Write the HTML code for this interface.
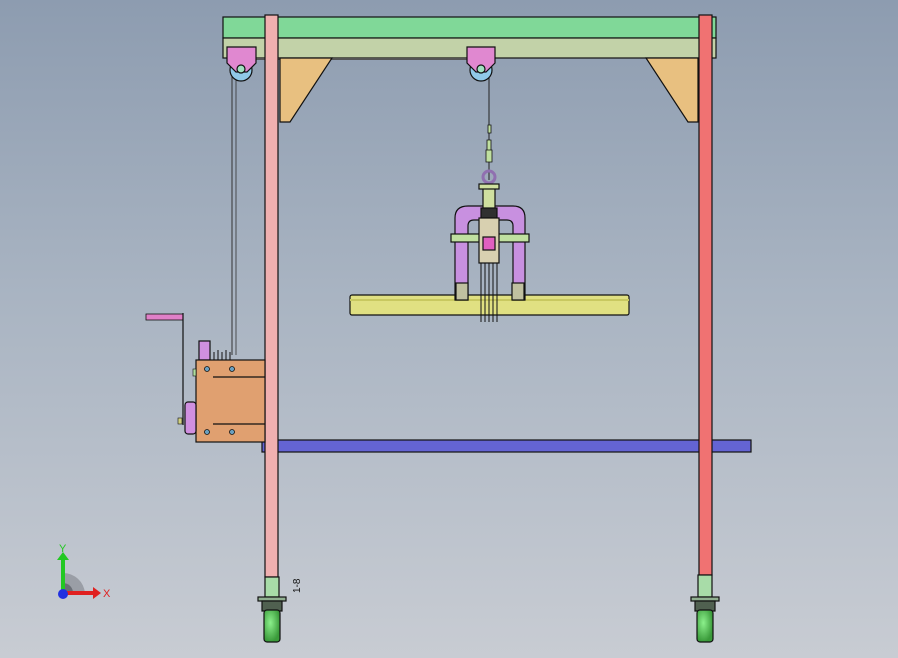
<!DOCTYPE html>
<html><head><meta charset="utf-8"><style>
html,body{margin:0;padding:0;width:898px;height:658px;overflow:hidden}
body{background:linear-gradient(#8d9cb0,#a9b4c2 45%,#c8ccd3)}
svg{position:absolute;left:0;top:0}
</style></head><body>
<svg width="898" height="658" viewBox="0 0 898 658" font-family="Liberation Sans, sans-serif">
<defs>
<radialGradient id="wh" cx="0.4" cy="0.4" r="0.6"><stop offset="0" stop-color="#8cf08c"/><stop offset="1" stop-color="#3a9a3a"/></radialGradient>
</defs>
<g stroke="#111" stroke-width="1.2">
<!-- beams -->
<rect x="223" y="17" width="493" height="21" fill="#80d898"/>
<rect x="223" y="38" width="493" height="20" fill="#c2d2a8"/>
<line x1="256" y1="59" x2="467" y2="59" stroke="#555" stroke-width="2"/>
<!-- gussets -->
<polygon points="280,58 332,58 290,122 280,122" fill="#e8c080"/>
<polygon points="646,58 698,58 698,122 688,122" fill="#e8c080"/>
<!-- ropes -->
<line x1="232" y1="72" x2="232" y2="355" stroke="#333" stroke-width="1"/>
<line x1="236" y1="72" x2="236" y2="355" stroke="#333" stroke-width="0.8"/>
<line x1="489" y1="78" x2="489" y2="180" stroke="#222" stroke-width="1"/>
<!-- pulleys -->
<circle cx="241" cy="70" r="11" fill="#90c8e8"/>
<path d="M227 47 H256 V63 L247 72 H236 L227 63 Z" fill="#e088d0"/>
<circle cx="241" cy="69" r="4" fill="#a0e0c0"/>
<circle cx="481" cy="70" r="11" fill="#90c8e8"/>
<path d="M467 47 H495 V63 L486 72 H476 L467 63 Z" fill="#e088d0"/>
<circle cx="481" cy="69" r="4" fill="#a0e0c0"/>
<!-- blue bar -->
<rect x="262" y="440" width="489" height="12" fill="#6464d4"/>
<!-- posts -->
<rect x="265" y="15" width="13" height="562" fill="#f0b0b0"/>
<rect x="699" y="15" width="13" height="560" fill="#f07272"/>
<!-- winch -->
<rect x="146" y="314" width="37" height="6" fill="#e080c8" stroke-width="0.8"/>
<line x1="183" y1="313" x2="183" y2="425"/>
<rect x="199" y="341" width="11" height="19" fill="#d090e0"/>
<path d="M210 360 V350 M214 360 V352 M218 360 V350 M222 360 V352 M226 360 V350 M230 360 V352" stroke-width="1"/>
<rect x="196" y="360" width="69" height="82" fill="#e0a070"/>
<rect x="185" y="402" width="11" height="32" rx="3" fill="#d090e0"/>
<rect x="193" y="369" width="3" height="7" fill="#b0e0a0" stroke-width="0.6"/>
<rect x="178" y="418" width="4" height="6" fill="#d0d080" stroke-width="0.6"/>
<line x1="213" y1="377" x2="265" y2="377"/><line x1="213" y1="424" x2="265" y2="424"/>
<g fill="#6aa0c0" stroke-width="0.8"><circle cx="207" cy="369" r="2.5"/><circle cx="232" cy="369" r="2.5"/><circle cx="207" cy="432" r="2.5"/><circle cx="232" cy="432" r="2.5"/></g>
<!-- tube -->
<rect x="350" y="295" width="279" height="20" rx="2" fill="#e0e082"/>
<line x1="350" y1="300" x2="629" y2="300" stroke="#c8c860" stroke-width="2"/>
<!-- clamp -->
<path d="M455 300 V218 Q455 206 468 206 H513 Q525 206 525 218 V300 H513 V226 Q513 220 507 220 H474 Q468 220 468 226 V300 Z" fill="#c890e0"/>
<rect x="456" y="283" width="12" height="17" fill="#c0c0a0"/>
<rect x="512" y="283" width="12" height="17" fill="#c0c0a0"/>
<rect x="451" y="234" width="78" height="8" fill="#c0e0a0"/>
<rect x="483" y="185" width="12" height="30" fill="#d0e0a0"/>
<rect x="481" y="208" width="16" height="10" fill="#303030"/>
<circle cx="489" cy="177" r="6" fill="none" stroke="#9070b0" stroke-width="3"/>
<rect x="479" y="184" width="20" height="5" fill="#d0e0a0"/>
<rect x="479" y="218" width="20" height="45" fill="#d8d0b0"/>
<rect x="483" y="237" width="12" height="13" fill="#e060c0"/>
<path d="M481 263 V322 M485 263 V322 M489 263 V322 M493 263 V322 M497 263 V322" stroke-width="1"/>
<path d="M488 125 h3 v8 h-3z M487 140 h4 v10 h-4z M486 150 h6 v12 h-6z" fill="#c0e0a0" stroke-width="0.8"/>
<!-- casters -->
<rect x="265" y="577" width="14" height="20" fill="#a8dca8"/>
<rect x="258" y="597" width="28" height="4" fill="#90b090"/>
<rect x="262" y="601" width="20" height="10" fill="#506050"/>
<rect x="264" y="610" width="16" height="32" rx="3" fill="url(#wh)"/>
<rect x="698" y="575" width="14" height="22" fill="#a8dca8"/>
<rect x="691" y="597" width="28" height="4" fill="#90b090"/>
<rect x="695" y="601" width="20" height="10" fill="#506050"/>
<rect x="697" y="610" width="16" height="32" rx="3" fill="url(#wh)"/>
</g>
<text x="292" y="595" font-size="10" fill="#111" transform="rotate(-90 295 590)">1-8</text>
<!-- axis triad -->
<path d="M63 593 L63 573 A22 22 0 0 1 85 593 Z" fill="#9a9ea6"/>
<path d="M63 593 L63 583 A10 10 0 0 1 73 593 Z" fill="#6a6e76"/>
<rect x="61" y="557" width="4" height="36" fill="#22c822"/>
<polygon points="57,560 63,552 69,560" fill="#22c822"/>
<rect x="63" y="591" width="32" height="4" fill="#e02020"/>
<polygon points="93,587 101,593 93,599" fill="#e02020"/>
<circle cx="63" cy="594" r="5" fill="#2030e0"/>
<text x="59" y="552" font-size="11" fill="#22c822">Y</text>
<text x="103" y="597" font-size="11" fill="#e02020">X</text>
</svg>
</body></html>
